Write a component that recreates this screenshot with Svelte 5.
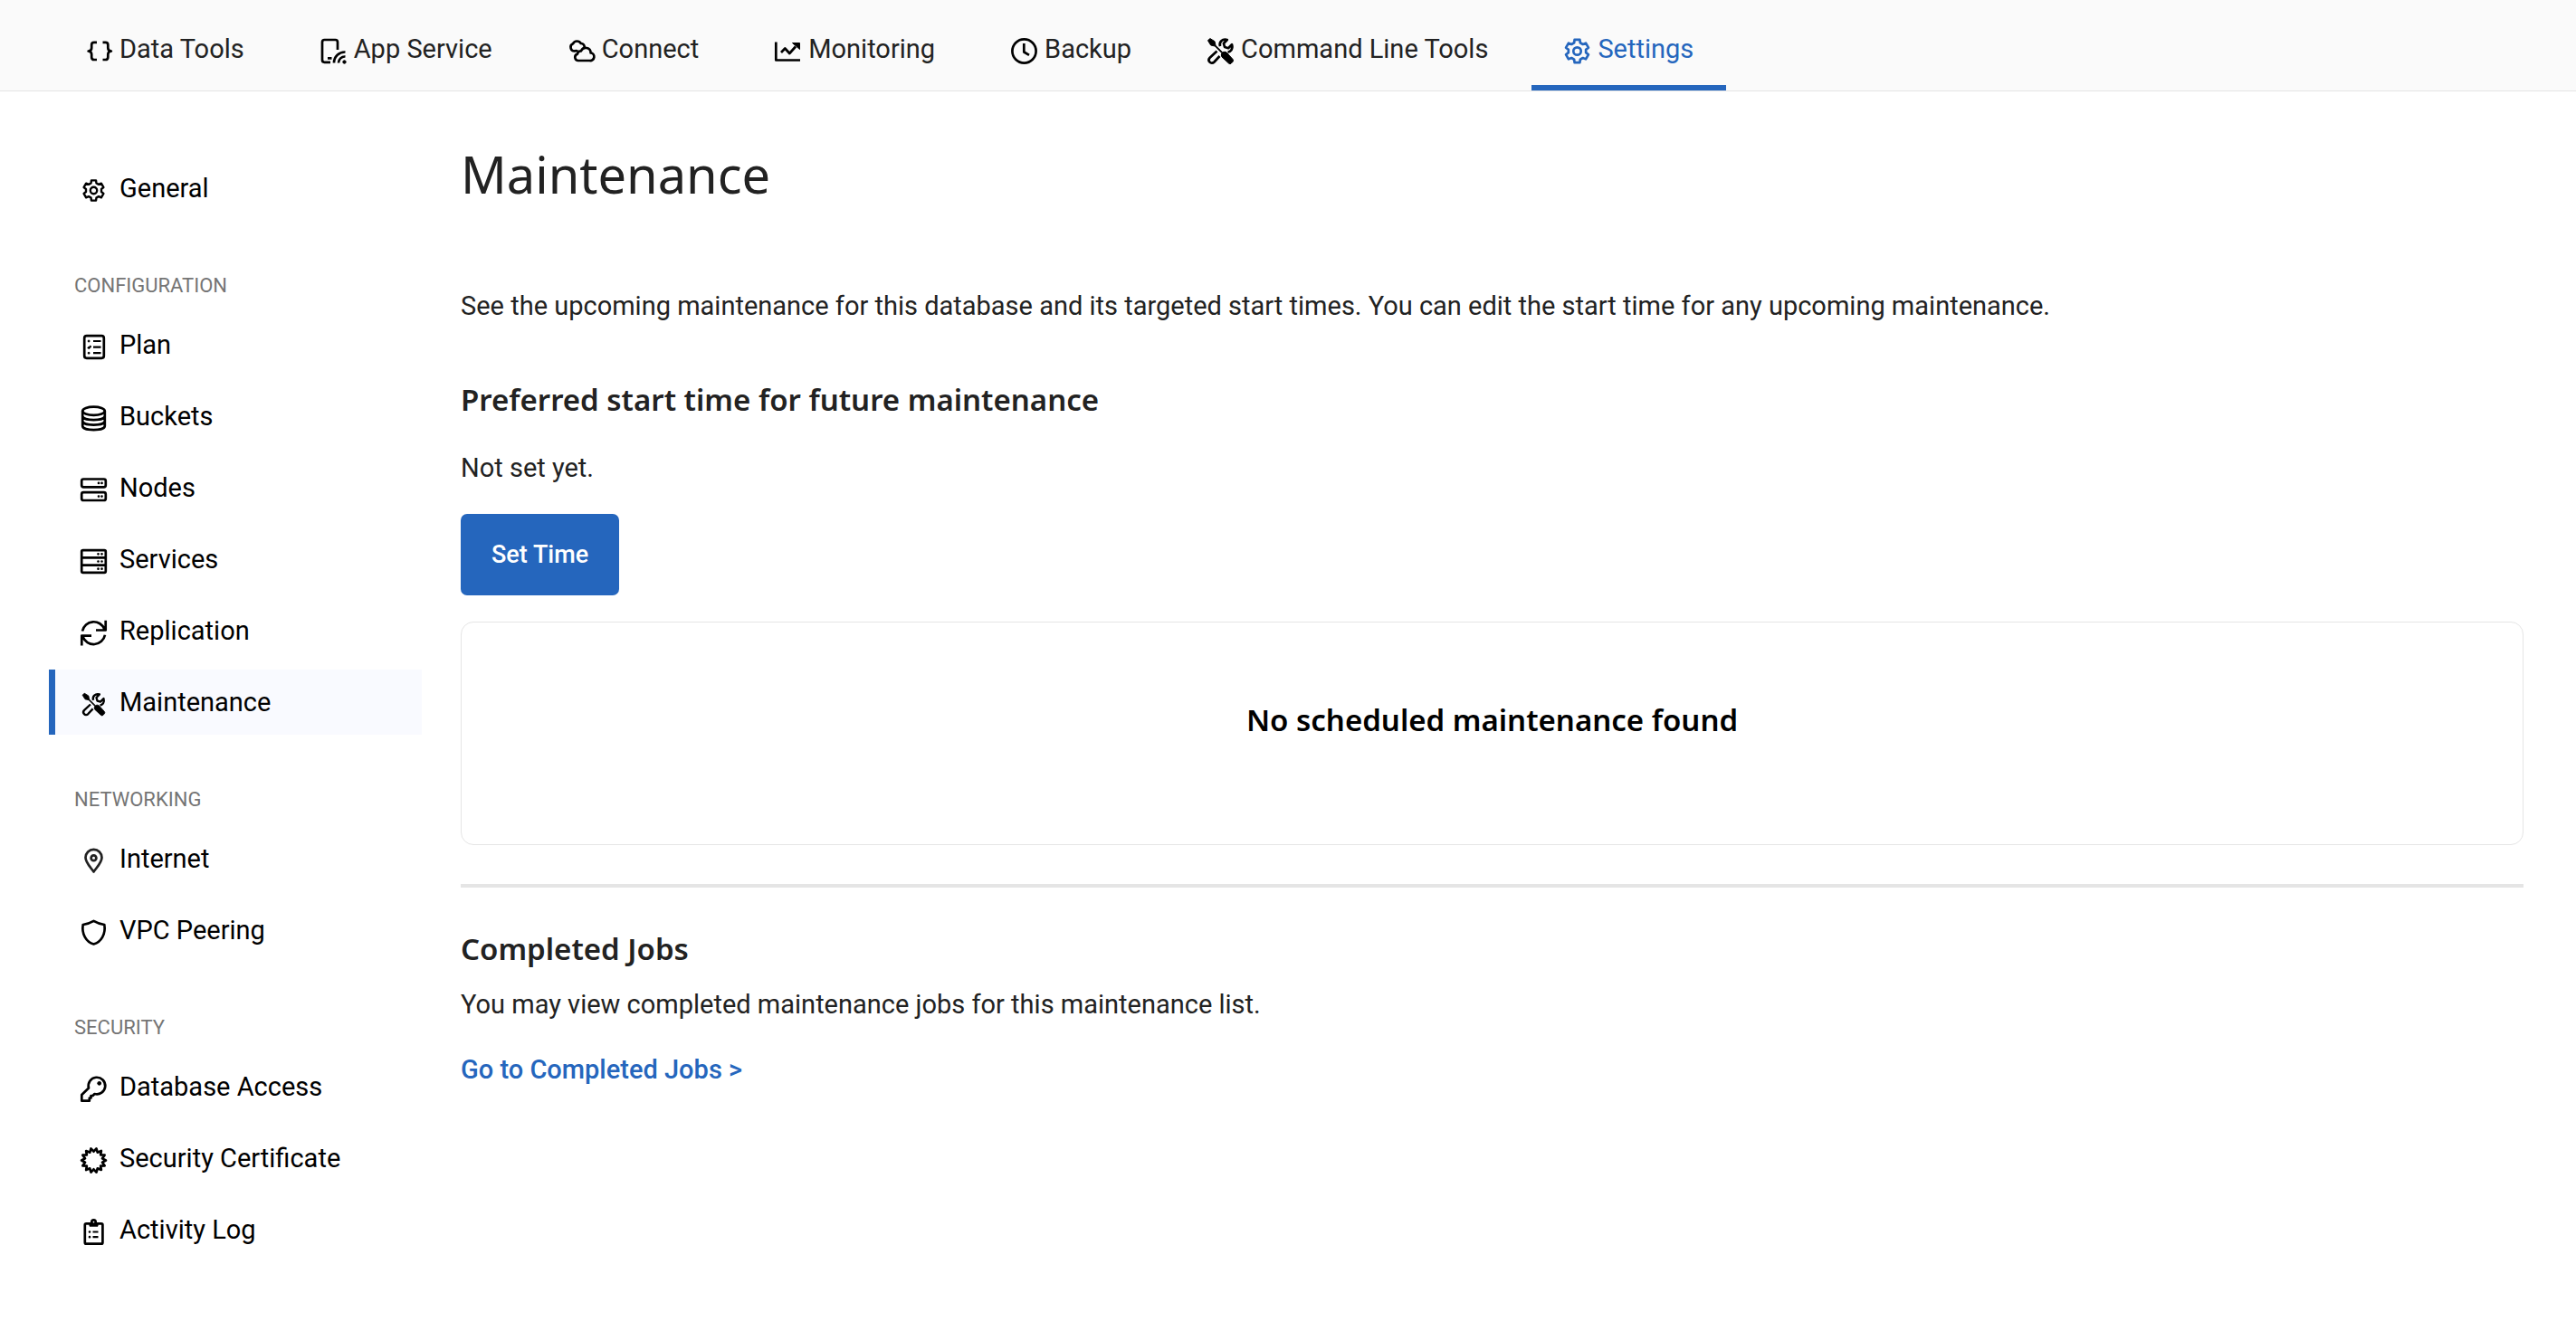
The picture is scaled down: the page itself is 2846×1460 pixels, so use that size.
<script>
  // Closed outline alternating between outer and inner radii, used for the badge icon.
  function burst(points, outer, inner) {
    const step = Math.PI / points;
    let d = '';
    for (let i = 0; i < points * 2; i++) {
      const r = i % 2 ? outer : inner;
      const a = -Math.PI / 2 + i * step;
      d += (i ? 'L' : 'M') + (14.5 + r * Math.cos(a)).toFixed(2) + ' ' + (14.5 + r * Math.sin(a)).toFixed(2);
    }
    return d + 'Z';
  }

  // Cog outline: each tooth has an outer plateau and a short valley beside it.
  function cog(teeth, outer, inner) {
    const rad = Math.PI / 180;
    let d = '';
    for (let i = 0; i < teeth; i++) {
      const mid = -90 + (i * 360) / teeth;
      for (const [off, r] of [[-20, inner], [-13, outer], [13, outer], [20, inner]]) {
        const a = (mid + off) * rad;
        d += (d ? 'L' : 'M') + (14.5 + r * Math.cos(a)).toFixed(2) + ' ' + (14.5 + r * Math.sin(a)).toFixed(2);
      }
    }
    return d + 'Z';
  }

  const cogPath = cog(6, 13, 9.8);
  const burstPath = burst(14, 13.4, 9.8);

  const tabs = [
    { icon: 'braces', label: 'Data Tools' },
    { icon: 'app', label: 'App Service' },
    { icon: 'clouds', label: 'Connect' },
    { icon: 'chart', label: 'Monitoring' },
    { icon: 'clock', label: 'Backup' },
    { icon: 'tools', label: 'Command Line Tools' },
    { icon: 'cog', label: 'Settings', active: true }
  ];

  const groups = [
    { items: [{ icon: 'cog', label: 'General', small: true }] },
    {
      title: 'Configuration',
      items: [
        { icon: 'plan', label: 'Plan' },
        { icon: 'buckets', label: 'Buckets' },
        { icon: 'nodes', label: 'Nodes' },
        { icon: 'services', label: 'Services' },
        { icon: 'sync', label: 'Replication' },
        { icon: 'tools', label: 'Maintenance', small: true, active: true }
      ]
    },
    {
      title: 'Networking',
      items: [
        { icon: 'pin', label: 'Internet' },
        { icon: 'shield', label: 'VPC Peering' }
      ]
    },
    {
      title: 'Security',
      items: [
        { icon: 'key', label: 'Database Access' },
        { icon: 'badge', label: 'Security Certificate' },
        { icon: 'clipboard', label: 'Activity Log' }
      ]
    }
  ];
</script>

{#snippet icon(name, small)}
  <svg class="icon" viewBox={small ? '-2 -2 33 33' : '0 0 29 29'} aria-hidden="true">
    {#if name === 'braces'}
      <path d="M12 4.8H9Q6.2 4.8 6.2 7.6V11Q6.2 14.2 2.6 14.5 6.2 14.8 6.2 18V21.2Q6.2 24 9 24H12M18.500 4.800H21.500Q24.300 4.800 24.300 7.600V11Q24.300 14.200 27.900 14.500 24.300 14.800 24.300 18V21.200Q24.300 24 21.500 24H18.500" />
    {:else if name === 'app'}
      <path d="M11 26.800H4.500Q2 26.800 2 24.300V4.500Q2 2 4.500 2H16.500Q19 2 19 4.500V13M8 22.300H12.500" />
      <path d="M15 27.500A12 12 0 0 1 27.500 15.500M20 27.500A7 7 0 0 1 27.500 20.500" />
      <circle class="solid" cx="26.500" cy="26.500" r="1.700" />
    {:else if name === 'clouds'}
      <path d="M7 14.500A4.300 4.300 0 0 1 5 6.300 5 5 0 0 1 13.800 6 3.800 3.800 0 0 1 17.500 11" />
      <path d="M10.500 25H23.500A4.300 4.300 0 0 0 24.600 16.400 5.500 5.500 0 0 0 14 14.300 3.800 3.800 0 0 0 10 17.600 3.800 3.800 0 0 0 10.500 25Z" />
      <path d="M6.500 14.500Q8.500 13.600 10.200 14.500" />
    {:else if name === 'chart'}
      <path d="M1.300 4.500V24.500H28" />
      <path d="M7 16 11.300 11.500 16.300 17 23 9.500" />
      <path class="solid" d="M19.500 5.500H27.500V12.500Z" />
    {:else if name === 'clock'}
      <circle cx="14.500" cy="14.500" r="13.100" />
      <path d="M14.300 6V15.500L20 18.800" />
    {:else if name === 'tools'}
      <path class="solid" d="M.5 2.800 2.800 .5 8 3.700 9 8.300 16.600 15.800 19 15.300 21 15.800 28 23.500Q29 25 28 26.200L26 28.300Q24.800 29 23.500 28L16 21 15.300 19 15.800 16.600 8.300 9 3.700 8Z" />
      <path d="M14 9.200C12.500 4.500 16.500 .5 21.800 2L17.900 6 19 10 23 11.200 27 7.200C28.500 12.300 25.500 15.300 22.500 15.600" />
      <path d="M10.500 14.500 2.700 21.700C-.6 25 4 30 7.500 26.500L13.500 20" />
    {:else if name === 'cog'}
      <path d={cogPath} />
      <circle cx="14.500" cy="14.500" r="4.200" />
    {:else if name === 'plan'}
      <rect x="4.200" y="2.200" width="21.600" height="24.600" rx="2.500" />
      <path class="thin" d="M14 8H22.500M14 14.600H22.500M14 21.200H22.500M8 14.600 9.200 15.800 11.500 13.300" />
      <rect class="solid" x="8.300" y="7.200" width="1.600" height="1.600" />
      <rect class="solid" x="8.300" y="20.400" width="1.600" height="1.600" />
    {:else if name === 'buckets'}
      <ellipse cx="14.500" cy="6.200" rx="12.300" ry="4.600" />
      <path d="M2.200 6.200V22.800C2.200 28.600 26.800 28.600 26.800 22.800V6.200M2.200 11.800C2.200 17.600 26.800 17.600 26.800 11.800M2.200 17.300C2.200 23.100 26.800 23.100 26.800 17.300" />
    {:else if name === 'nodes'}
      <rect x="1.200" y="2.500" width="26.600" height="8.800" rx="2" />
      <rect x="1.200" y="17.200" width="26.600" height="8.800" rx="2" />
      <path class="dots" d="M20 6.900H20.010M23.500 6.900H23.510M20 21.600H20.010M23.500 21.600H23.510" />
    {:else if name === 'services'}
      <rect x="1.200" y="2.200" width="26.600" height="24.600" rx="1.500" />
      <path d="M1.200 10.300H27.800M1.200 18.700H27.800" />
      <path class="dots" d="M19.500 6.300H19.510M23.500 6.300H23.510M19.500 14.500H19.510M23.500 14.500H23.510M19.500 22.700H19.510M23.500 22.700H23.510" />
    {:else if name === 'sync'}
      <path d="M2 12.500A12.800 12.800 0 0 1 26.500 10.500M27.700 .8V11.500H17M27 16.800A12.800 12.800 0 0 1 2.500 18.800M1.300 28.500V17.600H12" />
    {:else if name === 'pin'}
      <g class="soft">
        <path d="M14.500 26.500C11.500 22 5.500 16.500 5.500 10.800A9 9 0 0 1 23.500 10.800C23.500 16.500 17.500 22 14.500 26.500Z" />
        <circle cx="14.500" cy="11.200" r="2.900" />
      </g>
    {:else if name === 'shield'}
      <path d="M14.500 1.800Q20 5 26.300 6C28 16 23 25 14.500 27.500 6 25 1 16 2.700 6Q9 5 14.500 1.800Z" />
    {:else if name === 'key'}
      <path d="M1.300 27.700V21L9 13.500A9.300 9.300 0 1 1 15.500 20L13.500 22H11.500V24.500H9.800V27.700Z" />
      <circle class="solid" cx="20.700" cy="8.300" r="1.900" />
    {:else if name === 'badge'}
      <path d={burstPath} />
    {:else if name === 'clipboard'}
      <rect x="4.800" y="5.300" width="19.600" height="22.400" rx="1.500" />
      <path class="solid" d="M10 4.500H19V8.200H10Z" />
      <circle class="hollow" cx="14.500" cy="3.600" r="2.200" />
      <path class="thin" d="M13.500 14.500H19.500M13.500 20.200H19.500" />
      <path class="dots" d="M10 14.500H10.010M10 20.200H10.010" />
    {/if}
  </svg>
{/snippet}

<nav class="tabs" aria-label="Database">
  {#each tabs as tab}
    <a class="tab" class:active={tab.active} href="#tab" aria-current={tab.active ? 'page' : undefined}>
      {@render icon(tab.icon, false)}
      <span>{tab.label}</span>
    </a>
  {/each}
</nav>

<div class="layout">
  <aside class="sidebar">
    {#each groups as group}
      <section class="group">
        {#if group.title}<h2 class="group-title">{group.title}</h2>{/if}
        <ul>
          {#each group.items as item}
            <li>
              <a class="item" class:current={item.active} href="#item" aria-current={item.active ? 'page' : undefined}>
                {@render icon(item.icon, item.small)}
                <span>{item.label}</span>
              </a>
            </li>
          {/each}
        </ul>
      </section>
    {/each}
  </aside>

  <main>
    <h1>Maintenance</h1>
    <p class="intro">See the upcoming maintenance for this database and its targeted start times. You can edit the start time for any upcoming maintenance.</p>

    <h3>Preferred start time for future maintenance</h3>
    <p class="status">Not set yet.</p>
    <button type="button">Set Time</button>

    <div class="card"><h3>No scheduled maintenance found</h3></div>

    <hr />

    <h3>Completed Jobs</h3>
    <p class="jobs">You may view completed maintenance jobs for this maintenance list.</p>
    <a class="more" href="#jobs">Go to Completed Jobs &gt;</a>
  </main>
</div>

<style>
  :global(body) {
    background: #fff;
    color: #222;
    font: 400 29px/44px Roboto, 'Liberation Sans', sans-serif;
  }

  a {
    color: inherit;
    text-decoration: none;
  }

  h1,
  h2,
  h3,
  p,
  ul {
    margin: 0;
    padding: 0;
    font-weight: 400;
  }

  ul {
    list-style: none;
  }

  .icon {
    flex: none;
    width: 29px;
    height: 29px;
    overflow: visible;
    fill: none;
    stroke: #000;
    stroke-width: 2.7;
    stroke-linejoin: round;
  }

  .icon .solid {
    fill: #000;
    stroke-width: 1;
  }

  .icon .hollow {
    fill: #fff;
  }

  .icon .thin {
    stroke-width: 2.2;
  }

  .icon .dots {
    stroke-width: 2.7;
    stroke-linecap: round;
  }

  .icon .soft {
    stroke: #222;
  }

  .tabs {
    display: flex;
    gap: 12px;
    padding-left: 59px;
    background: #fafafa;
    border-bottom: 1px solid #e5e5e5;
  }

  .tab {
    display: flex;
    align-items: center;
    gap: 8px;
    padding: 32px 36px 18px;
    border-bottom: 6px solid transparent;
    white-space: nowrap;
  }

  .tab .icon {
    margin-top: 5px;
  }

  .tab.active {
    color: #2566bd;
    border-bottom-color: #2566bd;
  }

  .tab.active .icon {
    stroke: #2566bd;
  }

  .layout {
    display: grid;
    grid-template-columns: 412px minmax(0, 1fr);
    column-gap: 43px;
    padding: 0 58px 54px 54px;
  }

  .sidebar {
    display: flex;
    flex-direction: column;
    gap: 57px;
    padding-top: 71px;
    color: #000;
  }

  .group-title {
    margin-bottom: 14px;
    padding-left: 28px;
    color: #757575;
    font-size: 22px;
    line-height: 30px;
    text-transform: uppercase;
  }

  .group ul {
    display: flex;
    flex-direction: column;
    gap: 7px;
  }

  .item {
    display: flex;
    align-items: center;
    gap: 14px;
    padding: 14px 28px;
    border-left: 7px solid transparent;
  }

  .item .icon {
    margin-top: 4px;
  }

  .item.current {
    background: #f9faff;
    border-left-color: #2566bd;
  }

  main {
    padding-top: 53px;
  }

  h1 {
    font-family: 'Noto Sans', 'Open Sans', sans-serif;
    font-size: 56px;
    line-height: 76px;
  }

  h3 {
    font-family: 'Noto Sans', 'Open Sans', sans-serif;
    font-size: 33px;
    font-weight: 600;
    line-height: 44px;
  }

  .intro {
    margin: 86px 0 60px;
  }

  .status {
    margin: 31px 0 29px;
  }

  button {
    display: block;
    padding: 23px 34px;
    border: 0;
    border-radius: 7px;
    background: #2566bd;
    color: #fff;
    font: 500 27px/44px Roboto, 'Liberation Sans', sans-serif;
  }

  .card {
    margin-top: 29px;
    padding: 86px 28px 115px;
    border: 1px solid #e5e5e5;
    border-radius: 14px;
    color: #000;
    text-align: center;
  }

  hr {
    height: 4px;
    margin: 43px 0 46px;
    border: 0;
    background: #e5e5e5;
  }

  .jobs {
    margin: 17px 0 28px;
  }

  .more {
    color: #2566bd;
    font-weight: 500;
  }
</style>
